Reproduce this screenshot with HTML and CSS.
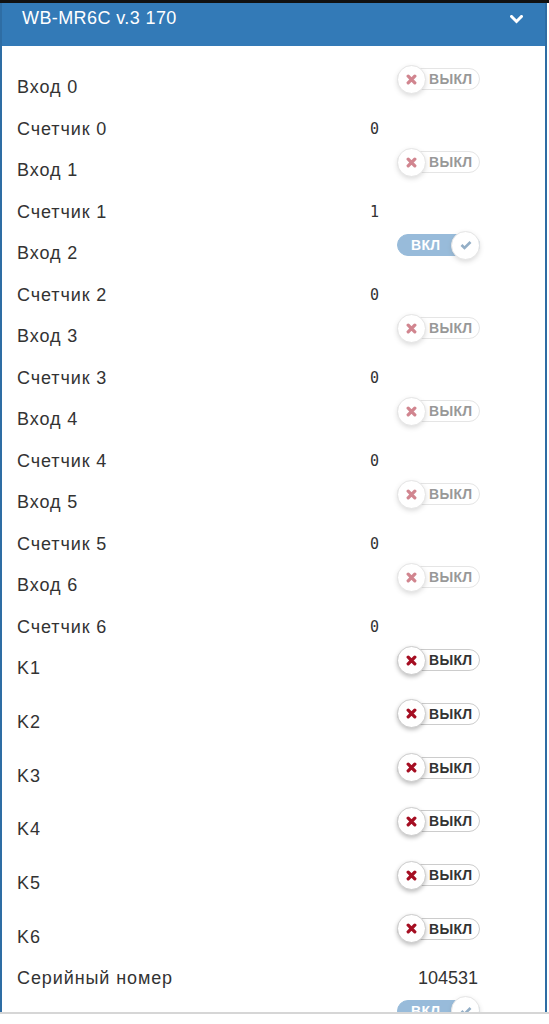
FILE: index.html
```html
<!DOCTYPE html>
<html lang="ru">
<head>
<meta charset="utf-8">
<link rel="stylesheet" href="styles.css">
</head>
<body>
<div class="topbar"></div>
<div class="viewport">
  <div class="panel">
    <div class="panel-heading">
      <span class="title">WB-MR6C v.3 170</span>
      <svg class="chevron" width="13" height="9" viewBox="0 0 13 9"><path d="M1.5 1.5 L6.5 6.5 L11.5 1.5" fill="none" stroke="#fff" stroke-width="3" stroke-linecap="square"/></svg>
    </div>
    <div class="panel-body">
      <div class="row row-in"><span class="label">Вход 0</span><span class="toggle muted"><span class="knob"><svg class="x" viewBox="0 0 10 10"><path d="M2 2 L8 8 M8 2 L2 8"/></svg></span><span class="txt">ВЫКЛ</span></span></div>
      <div class="row"><span class="label">Счетчик 0</span><span class="num">0</span></div>
      <div class="row row-in"><span class="label">Вход 1</span><span class="toggle muted"><span class="knob"><svg class="x" viewBox="0 0 10 10"><path d="M2 2 L8 8 M8 2 L2 8"/></svg></span><span class="txt">ВЫКЛ</span></span></div>
      <div class="row"><span class="label">Счетчик 1</span><span class="num">1</span></div>
      <div class="row row-in"><span class="label">Вход 2</span><span class="toggle on muted"><span class="txt">ВКЛ</span><span class="knob"><svg class="check" viewBox="0 0 12 10"><path d="M1.5 5 L4.5 8 L10.5 2"/></svg></span></span></div>
      <div class="row"><span class="label">Счетчик 2</span><span class="num">0</span></div>
      <div class="row row-in"><span class="label">Вход 3</span><span class="toggle muted"><span class="knob"><svg class="x" viewBox="0 0 10 10"><path d="M2 2 L8 8 M8 2 L2 8"/></svg></span><span class="txt">ВЫКЛ</span></span></div>
      <div class="row"><span class="label">Счетчик 3</span><span class="num">0</span></div>
      <div class="row row-in"><span class="label">Вход 4</span><span class="toggle muted"><span class="knob"><svg class="x" viewBox="0 0 10 10"><path d="M2 2 L8 8 M8 2 L2 8"/></svg></span><span class="txt">ВЫКЛ</span></span></div>
      <div class="row"><span class="label">Счетчик 4</span><span class="num">0</span></div>
      <div class="row row-in"><span class="label">Вход 5</span><span class="toggle muted"><span class="knob"><svg class="x" viewBox="0 0 10 10"><path d="M2 2 L8 8 M8 2 L2 8"/></svg></span><span class="txt">ВЫКЛ</span></span></div>
      <div class="row"><span class="label">Счетчик 5</span><span class="num">0</span></div>
      <div class="row row-in"><span class="label">Вход 6</span><span class="toggle muted"><span class="knob"><svg class="x" viewBox="0 0 10 10"><path d="M2 2 L8 8 M8 2 L2 8"/></svg></span><span class="txt">ВЫКЛ</span></span></div>
      <div class="row"><span class="label">Счетчик 6</span><span class="num">0</span></div>
      <div class="krows">
        <div class="row"><span class="label">K1</span><span class="toggle"><span class="knob"><svg class="x" viewBox="0 0 10 10"><path d="M2 2 L8 8 M8 2 L2 8"/></svg></span><span class="txt">ВЫКЛ</span></span></div>
        <div class="row"><span class="label">K2</span><span class="toggle"><span class="knob"><svg class="x" viewBox="0 0 10 10"><path d="M2 2 L8 8 M8 2 L2 8"/></svg></span><span class="txt">ВЫКЛ</span></span></div>
        <div class="row"><span class="label">K3</span><span class="toggle"><span class="knob"><svg class="x" viewBox="0 0 10 10"><path d="M2 2 L8 8 M8 2 L2 8"/></svg></span><span class="txt">ВЫКЛ</span></span></div>
        <div class="row"><span class="label">K4</span><span class="toggle"><span class="knob"><svg class="x" viewBox="0 0 10 10"><path d="M2 2 L8 8 M8 2 L2 8"/></svg></span><span class="txt">ВЫКЛ</span></span></div>
        <div class="row"><span class="label">K5</span><span class="toggle"><span class="knob"><svg class="x" viewBox="0 0 10 10"><path d="M2 2 L8 8 M8 2 L2 8"/></svg></span><span class="txt">ВЫКЛ</span></span></div>
        <div class="row"><span class="label">K6</span><span class="toggle"><span class="knob"><svg class="x" viewBox="0 0 10 10"><path d="M2 2 L8 8 M8 2 L2 8"/></svg></span><span class="txt">ВЫКЛ</span></span></div>
      </div>
      <div class="row"><span class="label">Серийный номер</span><span class="serial">104531</span></div>
      <div class="row"><span class="label">Связь</span><span class="toggle on muted"><span class="txt">ВКЛ</span><span class="knob"><svg class="check" viewBox="0 0 12 10"><path d="M1.5 5 L4.5 8 L10.5 2"/></svg></span></span></div>
    </div>
  </div>
</div>
<div class="bottom-line"></div>
</body>
</html>
```

FILE: styles.css
```css
html, body {
  margin: 0;
  padding: 0;
  background: #fff;
}
body {
  width: 549px;
  font-family: "Liberation Sans", Arial, sans-serif;
  color: #333;
}
.topbar {
  height: 3px;
  background: #111;
}
.viewport {
  height: 1009px;
  overflow: hidden;
}
.panel {
  width: 547px;
  box-sizing: border-box;
  border-left: 2px solid #2e6da4;
  border-right: 2px solid #2e6da4;
  min-height: 1009px;
}
.panel-heading {
  height: 43px;
  box-sizing: border-box;
  background: #337ab7;
  color: #fff;
  display: flex;
  align-items: flex-start;
  justify-content: space-between;
  padding: 5px 22px 0 20px;
}
.title {
  font-size: 18px;
  line-height: 20px;
  letter-spacing: 0.4px;
}
.chevron {
  margin-top: 7px;
}
.panel-body {
  padding: 19px 0 0 15px;
}
.row {
  display: flex;
  align-items: flex-start;
  height: 41px;
}
.row-in {
  height: 42px;
}
.krows {
  display: flex;
  flex-direction: column;
  gap: 12.8px;
}
.label {
  width: 353px;
  font-size: 18px;
  letter-spacing: 0.9px;
  line-height: 41px;
  margin-top: 2px;
  flex: none;
}
.num {
  font-family: "DejaVu Sans Mono", monospace;
  font-size: 15px;
  line-height: 41px;
  margin-top: 2px;
  color: #333;
}
.serial {
  width: 108px;
  text-align: right;
  font-size: 18px;
  line-height: 41px;
  margin-top: 2px;
}
.toggle {
  margin: 3px 0 0 27px;
  display: inline-flex;
  align-items: center;
  width: 83px;
  height: 22px;
  box-sizing: border-box;
  border: 1px solid #ccc;
  border-radius: 11px;
  background: #fff;
}
.toggle.muted {
  opacity: 0.5;
}
.knob {
  flex: none;
  width: 29px;
  height: 29px;
  box-sizing: border-box;
  border-radius: 50%;
  background: #fff;
  border: 1px solid #ccc;
  box-shadow: 0 2px 4px rgba(0, 0, 0, 0.25);
  margin: -3px 0 -3px -1px;
  display: flex;
  align-items: center;
  justify-content: center;
}
.txt {
  font-size: 14px;
  font-weight: bold;
  color: #333;
  margin-left: 3px;
  letter-spacing: 0.3px;
}
.x {
  width: 11px;
  height: 11px;
}
.x path {
  stroke: #a50e22;
  stroke-width: 3;
  stroke-linecap: round;
  fill: none;
}
.check {
  width: 12px;
  height: 10px;
}
.check path {
  stroke: #2a5f8f;
  stroke-width: 2.6;
  fill: none;
}
.toggle.on {
  background: #337ab7;
  border-color: #337ab7;
}
.toggle.on .txt {
  color: #fff;
  margin-left: 13px;
  margin-right: auto;
}
.toggle.on .knob {
  margin: -3px -1px -3px 0;
}
.bottom-line {
  height: 2px;
  background: #d6d6d6;
}
```
